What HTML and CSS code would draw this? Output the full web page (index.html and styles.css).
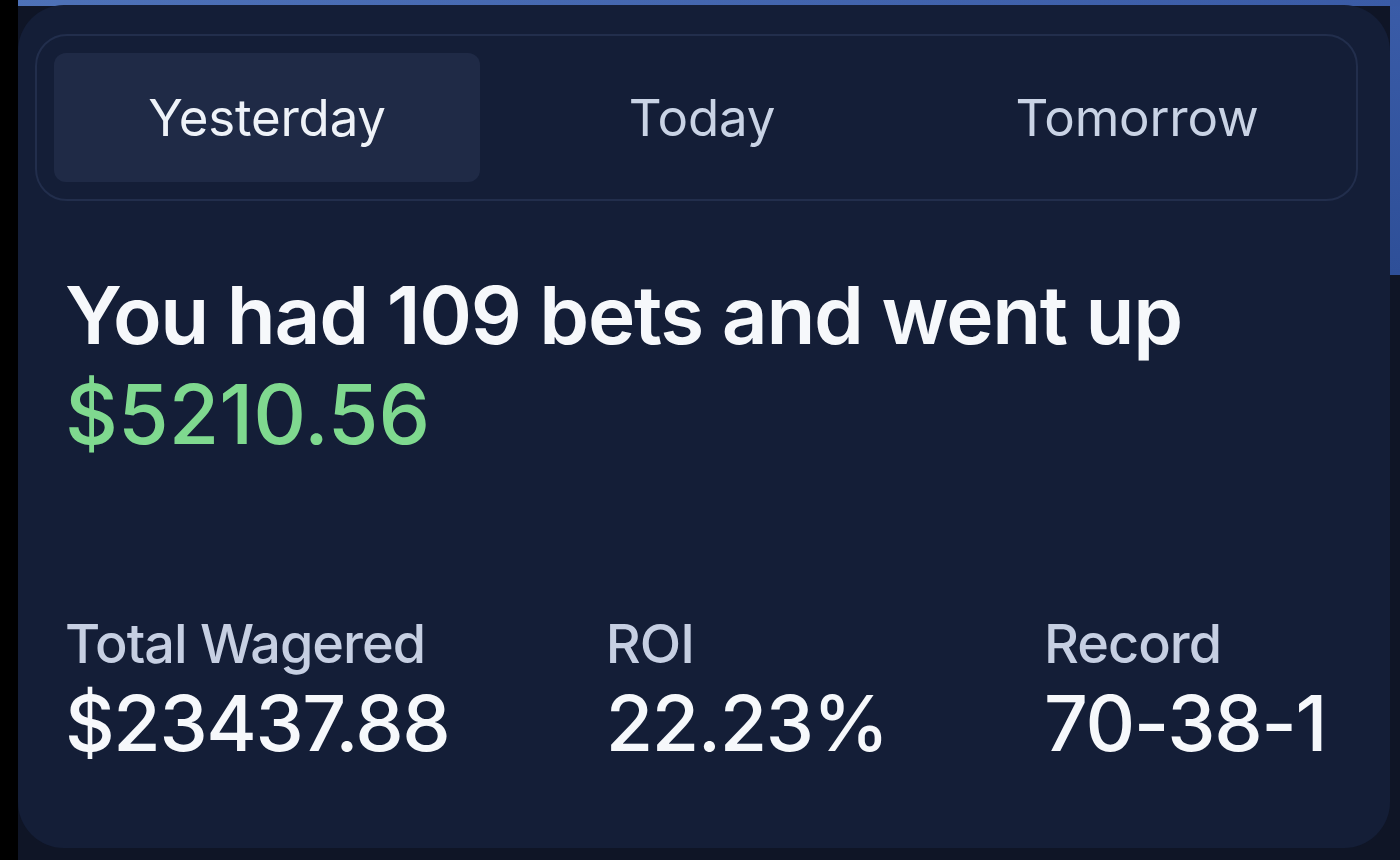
FILE: index.html
```html
<!DOCTYPE html>
<html lang="en">
<head>
<meta charset="utf-8">
<title>Betting summary</title>
<link rel="stylesheet" href="styles.css">
</head>
<body>
<main class="card">
  <nav class="tabs">
    <button class="tab active">Yesterday</button>
    <button class="tab">Today</button>
    <button class="tab">Tomorrow</button>
  </nav>
  <section class="summary">
    <h1 class="headline">You had 109 bets and went up</h1>
    <p class="amount">$5210.56</p>
  </section>
  <section class="stats">
    <div class="stat">
      <div class="label">Total Wagered</div>
      <div class="value">$23437.88</div>
    </div>
    <div class="stat">
      <div class="label">ROI</div>
      <div class="value">22.23%</div>
    </div>
    <div class="stat">
      <div class="label">Record</div>
      <div class="value">70-38-1</div>
    </div>
  </section>
</main>
</body>
</html>
```

FILE: styles.css
```css
* { box-sizing: border-box; }
html, body { height: 100%; }
body {
  margin: 0;
  padding: 5px 10px 12px 18px;
  font-family: Inter, "Liberation Sans", sans-serif;
  background:
    linear-gradient(90deg, #000 0 18px, transparent 18px),
    linear-gradient(90deg, #4e72b8, #3a5ba6) top left / 100% 6px no-repeat,
    linear-gradient(#3a5ca8, #2e4f98) top right / 10px 275px no-repeat,
    #0f1526;
}
.card {
  height: 843px;
  background: #141e37;
  border-radius: 46px;
  padding: 29px 32px 0 17px;
  display: flex;
  flex-direction: column;
}
.tabs {
  height: 167px;
  border: 2px solid #222e4c;
  border-radius: 32px;
  padding: 17px 6px 17px 17px;
  display: grid;
  grid-template-columns: repeat(3, 1fr);
  gap: 9px;
}
.tab {
  font: inherit;
  font-size: 51px;
  font-weight: 400;
  color: #c9d3e5;
  background: transparent;
  border: 0;
  border-radius: 12px;
  letter-spacing: -0.2px;
}
.tab.active {
  background: #1f2a46;
  color: #eef2f8;
}
.summary {
  padding: 64px 0 0 30px;
}
.headline {
  margin: 0;
  font-size: 80px;
  font-weight: 600;
  line-height: 100px;
  color: #f6f8fb;
  letter-spacing: -1.3px;
}
.amount {
  margin: 0;
  font-size: 82px;
  font-weight: 500;
  line-height: 100px;
  color: #7fd98f;
  letter-spacing: 0;
}
.stats {
  display: flex;
  justify-content: space-between;
  padding: 139px 32px 0 30px;
}
.label {
  font-size: 54px;
  font-weight: 500;
  line-height: 80px;
  color: #c6cfe2;
  letter-spacing: -1px;
}
.value {
  font-size: 77px;
  font-weight: 500;
  line-height: 78px;
  color: #f6f8fb;
  letter-spacing: -1.4px;
}
```
